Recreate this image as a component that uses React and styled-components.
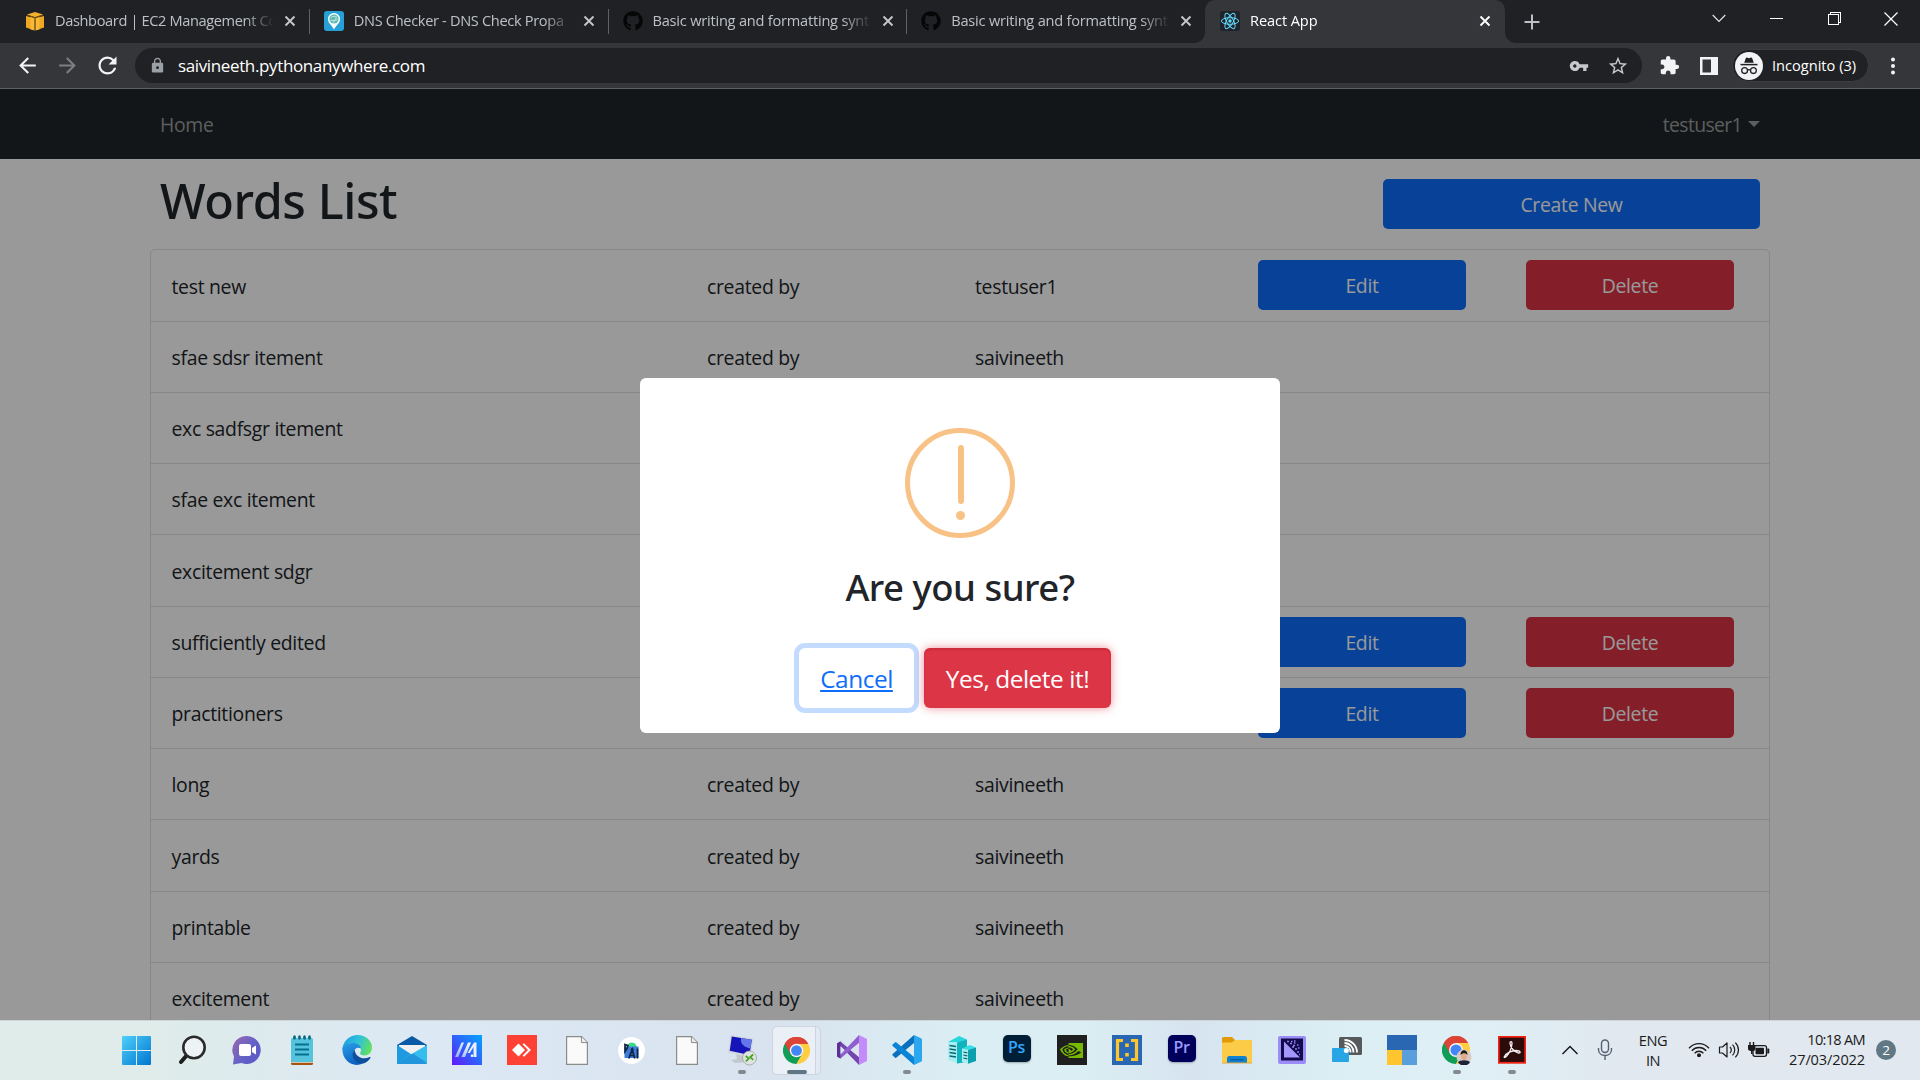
import React from "react";
import styled, { createGlobalStyle, css } from "styled-components";
import { FaGithub } from "react-icons/fa";
import { MdArrowBack, MdArrowForward, MdRefresh, MdLock, MdVpnKey, MdStarBorder, MdExtension } from "react-icons/md";
import { SiNvidia } from "react-icons/si";

const GlobalStyle = createGlobalStyle`
  *, *::before, *::after { box-sizing: border-box; }
  body { margin: 0; overflow: hidden; font-family: "Open Sans", "Noto Sans", sans-serif; }
  svg { display: block; flex: none; }
`;

const Screen = styled.div`
  width: 1920px;
  height: 1080px;
  display: flex;
  flex-direction: column;
  overflow: hidden;
`;

/* ---------- browser chrome ---------- */

const TabStrip = styled.header`
  height: 43px;
  flex: none;
  display: flex;
  padding-left: 10px;
  background: #202124;
`;

const Tab = styled.div`
  width: 298.75px;
  height: 43px;
  flex: none;
  display: flex;
  align-items: center;
  padding: 0 14px 1px 15px;
  position: relative;
  color: ${(p) => (p.$active ? "#fff" : "#bdc1c6")};
  ${(p) =>
    p.$active
      ? css`
          width: 300px;
          background: #35363a;
          border-radius: 10px 10px 0 0;
          &::before,
          &::after {
            content: "";
            position: absolute;
            bottom: 0;
            width: 10px;
            height: 10px;
          }
          &::before {
            left: -10px;
            background: radial-gradient(circle at 0 0, transparent 9.5px, #35363a 10px);
          }
          &::after {
            right: -10px;
            background: radial-gradient(circle at 100% 0, transparent 9.5px, #35363a 10px);
          }
        `
      : ""}
  ${(p) =>
    p.$divider
      ? css`
          &::after {
            content: "";
            position: absolute;
            right: -1px;
            top: 9px;
            width: 1px;
            height: 25px;
            background: #5f6165;
          }
        `
      : ""}
`;

const Favicon = styled.span`
  width: 20px;
  margin-right: 10px;
  display: flex;
  justify-content: center;
  flex: none;
`;

const TabTitle = styled.span`
  width: 220px;
  flex: none;
  overflow: hidden;
  white-space: nowrap;
  padding-bottom: 2px;
  font-size: 14.6px;
  line-height: 24px;
  letter-spacing: ${(p) => p.$spacing}px;
  mask-image: linear-gradient(90deg, #000 190px, transparent 219px);
`;

const CloseIcon = styled.svg`
  margin-left: 9px;
`;

const NewTab = styled.div`
  width: 54px;
  display: flex;
  align-items: center;
  justify-content: center;
`;

const WindowControls = styled.div`
  margin-left: auto;
  display: flex;
  height: 37px;
  align-items: center;
`;

const ControlCell = styled.div`
  width: 57.3px;
  display: flex;
  justify-content: center;
`;

const Toolbar = styled.div`
  height: 46px;
  flex: none;
  display: flex;
  align-items: center;
  padding: 0 0 0 7px;
  background: #35363a;
  border-bottom: 1px solid #5f6063;
`;

const NavIcon = styled.div`
  width: 40px;
  display: flex;
  justify-content: center;
  padding-left: 1px;
  color: ${(p) => (p.$dim ? "#7d7e81" : "#f1f3f4")};
`;

const Omnibox = styled.div`
  width: 1507px;
  height: 35px;
  margin-left: 8px;
  padding: 0 13px 0 14px;
  border-radius: 18px;
  background: #202124;
  display: flex;
  align-items: center;
  color: #9aa0a6;
`;

const Url = styled.span`
  margin-left: 12px;
  padding-bottom: 1px;
  color: #fff;
  font-size: 17px;
  letter-spacing: -0.37px;
`;

const OmniActions = styled.div`
  margin-left: auto;
  display: flex;
  align-items: center;
  gap: 18px;
  color: #c6c8ca;
`;

const ExtensionCell = styled.div`
  width: 40px;
  display: flex;
  justify-content: center;
  color: #f1f3f4;
  margin-left: ${(p) => p.$before || 0}px;
`;

const IncognitoPill = styled.div`
  width: 137px;
  height: 33px;
  margin-left: 3px;
  padding-left: 2px;
  border: 1px solid #3c3d41;
  border-radius: 17px;
  background: #202124;
  display: flex;
  align-items: center;
  color: #fff;
  font-size: 14.6px;
`;

const PillLabel = styled.span`
  margin-left: 9px;
  padding-bottom: 2px;
`;

/* ---------- web page ---------- */

const Page = styled.main`
  flex: 1;
  min-height: 0;
  overflow: hidden;
  position: relative;
  background: #fff;
  color: #212529;
  font-size: 19.4px;
  letter-spacing: -0.3px;
`;

const Navbar = styled.nav`
  height: 70px;
  padding: 0 160px;
  display: flex;
  align-items: center;
  justify-content: space-between;
  background: #212529;
  color: #9b9d9e;
`;

const UserMenu = styled.span`
  display: flex;
  align-items: center;
  letter-spacing: -0.65px;
`;

const Caret = styled.span`
  margin: 0 0 1px 6px;
  border: 6px solid transparent;
  border-top-color: #9b9d9e;
  border-bottom: 0;
`;

const PageHeader = styled.div`
  height: 90px;
  padding: 0 160px;
  display: flex;
  align-items: center;
  justify-content: space-between;
`;

const PageTitle = styled.h1`
  margin: 0;
  padding-bottom: 8.5px;
  font: 500 48.5px / 60px "Noto Sans", sans-serif;
  letter-spacing: -0.4px;
`;

const Button = styled.button`
  height: 50px;
  width: ${(p) => (p.$wide ? 377 : 208)}px;
  margin: 0 ${(p) => (p.$wide ? 0 : 15)}px;
  padding: 1px 0 0;
  border: 0;
  border-radius: 5px;
  color: #fff;
  background: ${(p) => (p.$danger ? "#dc3545" : "#0d6efd")};
  font-family: inherit;
  font-size: inherit;
  letter-spacing: inherit;
`;

const WordList = styled.ul`
  width: 1620px;
  margin: 0 auto;
  padding: 0;
  list-style: none;
  border: 1px solid #dfdfdf;
  border-radius: 5px;
`;

const WordRow = styled.li`
  height: 71.25px;
  padding-left: 20.5px;
  display: grid;
  grid-template-columns: 535.5px 268px 268px 268px 238px;
  align-items: center;
  border-top: 1px solid #dfdfdf;
  &:first-child {
    height: 70.5px;
    border-top: 0;
  }
`;

const WordCell = styled.span`
  padding-top: 1.5px;
`;

const Backdrop = styled.div`
  position: absolute;
  inset: 0;
  background: rgba(0, 0, 0, 0.4);
`;

const Modal = styled.section`
  position: absolute;
  left: 640px;
  top: 289px;
  width: 640px;
  height: 355px;
  padding-top: 50px;
  border-radius: 6px;
  background: #fff;
  display: flex;
  flex-direction: column;
  align-items: center;
`;

const WarningRing = styled.div`
  width: 110px;
  height: 110px;
  padding-top: 12px;
  border: 5px solid #f8c286;
  border-radius: 50%;
  display: flex;
  flex-direction: column;
  align-items: center;
  gap: 7px;
`;

const WarningBar = styled.span`
  width: 6px;
  height: 59px;
  margin-left: 2px;
  border-radius: 3px;
  background: #f8c286;
`;

const WarningDot = styled.span`
  width: 9px;
  height: 9px;
  margin-left: 1px;
  border-radius: 50%;
  background: #f8c286;
`;

const ModalTitle = styled.h2`
  margin: 27px 0 38px;
  font: 500 36.5px / 45px "Noto Sans", sans-serif;
  letter-spacing: -0.5px;
`;

const ModalActions = styled.div`
  display: flex;
  gap: 10px;
  padding-right: 10px;
`;

const ModalButton = styled.button`
  width: ${(p) => (p.$danger ? 187 : 115)}px;
  height: 60px;
  padding: 1px 0 0;
  border: 0;
  border-radius: 6px;
  font-family: inherit;
  font-size: 24.4px;
  letter-spacing: -0.45px;
  ${(p) =>
    p.$danger
      ? css`
          color: #fff;
          background: #dc3545;
          box-shadow: inset 0 2px 2px rgba(150, 10, 30, 0.22), 0 0 10px rgba(220, 53, 69, 0.55);
        `
      : css`
          color: #0d6efd;
          background: #fff;
          text-decoration: underline;
          text-decoration-thickness: 2px;
          text-underline-offset: 2px;
          box-shadow: 0 0 0 5px #c2dbfe;
        `}
`;

/* ---------- taskbar ---------- */

const Taskbar = styled.footer`
  height: 60px;
  flex: none;
  display: flex;
  align-items: center;
  padding: 0 0 1px 109px;
  color: #1b1b1b;
  border-top: 1px solid #ccd6da;
  background: linear-gradient(90deg, #dfecea 0, #dfecea 150px, #dce8f3 420px, #d8e3ef 780px, #dbeef3 960px, #dbeef3 1080px, #d7e4f0 1190px, #dceff4 1350px, #dfeff5 1480px, #e1e8f0 1620px, #e2e8f0 1920px);
`;

const AppSlot = styled.div`
  width: 55px;
  height: 58px;
  display: flex;
  align-items: center;
  justify-content: center;
  position: relative;
  ${(p) =>
    p.$running
      ? css`
          &::after {
            content: "";
            position: absolute;
            bottom: 5px;
            width: ${p.$focused ? 20 : 8}px;
            height: 4px;
            border-radius: 2px;
            background: ${p.$focused ? "#5f7684" : "#84898f"};
          }
        `
      : ""}
`;

const FocusPlate = styled.div`
  width: 49px;
  height: 49px;
  display: flex;
  flex: none;
  align-items: center;
  justify-content: center;
  border: 1px solid #cdd6e0;
  border-radius: 5px;
  background: linear-gradient(90deg, #ebeff6 42px, #cdd6e0 42px, #cdd6e0 43px, #e2e9f2 43px);
`;

const Tray = styled.div`
  display: flex;
  align-items: center;
  margin-left: 13px;
  font-size: 14.6px;
  line-height: 20px;
`;

const TrayCell = styled.div`
  width: ${(p) => p.$width}px;
  display: flex;
  justify-content: center;
`;

const Language = styled.div`
  width: 62px;
  text-align: center;
  letter-spacing: -0.45px;
  padding-bottom: 1px;
`;

const Clock = styled.div`
  width: 91px;
  display: flex;
  flex-direction: column;
  align-items: flex-end;
  padding-bottom: 3px;
`;

const ClockLine = styled.span`
  letter-spacing: ${(p) => p.$spacing}px;
`;

const Badge = styled.span`
  width: 20px;
  height: 20px;
  margin-left: 11px;
  border-radius: 50%;
  background: #5f7884;
  color: #fff;
  font-size: 13.5px;
  line-height: 20px;
  text-align: center;
`;

/* ---------- icons ---------- */

const AwsIcon = () => (
  <svg width="18" height="19" viewBox="0 0 18 19">
    <path d="M9 0l8 2.6L9 5.2 1 2.6z" fill="#f5b02c" />
    <path d="M0 4l5 1.2v12L0 15.4zM13 5.2L18 4v11.4l-5 1.800z" fill="#f0a824" />
    <path d="M4.600 5.100L8.600 6v12.500l-4-1.100zM13.400 5.100L9.400 6v12.500l4-1.100z" fill="#f8b935" />
    <path d="M1 3.200l8 2.300 8-2.300M9 5.500V18" stroke="#8a5a12" strokeWidth=".800" fill="none" />
  </svg>
);

const DnsIcon = () => (
  <svg width="20" height="20" viewBox="0 0 20 20">
    <rect width="20" height="20" rx="3" fill="#25a0d8" />
    <path d="M10 2a6 6 0 0 0-6 6.2C4 12 8 14.6 10 18.4c2-3.8 6-6.4 6-10.2A6 6 0 0 0 10 2z" fill="#fff" />
    <circle cx="10" cy="8" r="4.6" fill="#5db8b4" />
    <path d="M7 6.6c2-1.8 4-1.4 5.6-.4M6.4 9c2 .8 5 .8 7-.4M9 11.8c1-2 3-3 3.400-6" stroke="#c9ebe6" strokeWidth=".9" fill="none" />
  </svg>
);

const ReactIcon = () => (
  <svg width="20" height="20" viewBox="0 0 20 20">
    <rect width="20" height="20" rx="3" fill="#20232a" />
    <g stroke="#61dafb" strokeWidth="1" fill="none">
      <ellipse cx="10" cy="10" rx="8.6" ry="3.3" />
      <ellipse cx="10" cy="10" rx="8.6" ry="3.3" transform="rotate(60 10 10)" />
      <ellipse cx="10" cy="10" rx="8.6" ry="3.3" transform="rotate(120 10 10)" />
    </g>
    <circle cx="10" cy="10" r="1.7" fill="#61dafb" />
  </svg>
);

const Cross = ({ color }) => (
  <CloseIcon width="12" height="12" viewBox="0 0 12 12">
    <path d="M1.5 1.5l9 9m0-9l-9 9" stroke={color} strokeWidth="1.9" />
  </CloseIcon>
);

const IncognitoIcon = () => (
  <svg width="28" height="28" viewBox="0 0 28 28">
    <circle cx="14" cy="14" r="14" fill="#f1f3f4" />
    <path d="M9.2 10.8l1.6-4.6c.3-.8.9-.8 1.6-.5l1.6.5 1.6-.5c.7-.3 1.3-.3 1.6.5l1.6 4.6z" fill="#202124" />
    <path d="M5.5 12.6h17" stroke="#202124" strokeWidth="1.5" />
    <g fill="none" stroke="#202124" strokeWidth="1.3">
      <circle cx="9.6" cy="18.6" r="2.9" />
      <circle cx="18.4" cy="18.6" r="2.9" />
      <path d="M12.4 18.2c1-.7 2.2-.7 3.2 0" />
    </g>
  </svg>
);

const WindowsIcon = () => (
  <svg width="29" height="29" viewBox="1 1 29 29">
    <defs>
      <linearGradient id="win" x1="0" y1="0" x2="1" y2="1">
        <stop offset="0" stopColor="#4fd0fb" />
        <stop offset="1" stopColor="#0075cf" />
      </linearGradient>
    </defs>
    <path d="M2 1h13v14H1V2a1 1 0 0 1 1-1zM16 1h13a1 1 0 0 1 1 1v13H16zM1 16h14v14H2a1 1 0 0 1-1-1zM16 16h14v13a1 1 0 0 1-1 1H16z" fill="url(#win)" />
  </svg>
);

const SearchIcon = () => (
  <svg width="28" height="30" viewBox="0 0 28 30">
    <path d="M9 20L3 27" stroke="#1e1e1e" strokeWidth="4" strokeLinecap="round" />
    <circle cx="16" cy="12.500" r="10.700" fill="#edf2f4" stroke="#2a2a2b" strokeWidth="2.600" />
  </svg>
);

const ChatIcon = () => (
  <svg width="30" height="30" viewBox="0 0 30 30">
    <defs>
      <linearGradient id="chat" x1="0" y1=".2" x2="1" y2=".9">
        <stop offset="0" stopColor="#9467ad" />
        <stop offset=".5" stopColor="#6562c8" />
        <stop offset="1" stopColor="#5a55c5" />
      </linearGradient>
    </defs>
    <path d="M15 1a14 14 0 1 1-5.500 27L1 29.500l1-8A14 14 0 0 1 15 1z" fill="url(#chat)" />
    <rect x="7" y="9" width="12" height="12" rx="2" fill="#fff" />
    <path d="M20 13l4-2.500v9L20 17z" fill="#fff" />
  </svg>
);

const NotepadIcon = () => (
  <svg width="22" height="30" viewBox="0 0 22 30">
    <path d="M0 26h22v2.500a1.500 1.500 0 0 1-1.500 1.500h-19A1.500 1.500 0 0 1 0 28.500z" fill="#a3540e" />
    <path d="M0 27.200h22" stroke="#f4f4f4" />
    <rect y="3" width="22" height="24" rx="1.500" fill="#55c3dc" />
    <path d="M4 9.500h14M4 14.500h14M4 19.500h14" stroke="#076f8f" strokeWidth="1.800" />
    <g fill="#0a6780">
      <ellipse cx="3.500" cy="2.500" rx="1.400" ry="2.200" />
      <ellipse cx="8.500" cy="2.500" rx="1.400" ry="2.200" />
      <ellipse cx="13.500" cy="2.500" rx="1.400" ry="2.200" />
      <ellipse cx="18.500" cy="2.500" rx="1.400" ry="2.200" />
    </g>
  </svg>
);

const EdgeIcon = () => (
  <svg width="30" height="30" viewBox="0 0 30 30">
    <defs>
      <linearGradient id="edgeTop" x1="0" y1=".3" x2="1" y2=".6">
        <stop offset="0" stopColor="#1f9fe2" />
        <stop offset=".5" stopColor="#2fc3d8" />
        <stop offset="1" stopColor="#65e15a" />
      </linearGradient>
      <linearGradient id="edgeLeft" x1="0" y1="0" x2=".4" y2="1">
        <stop offset="0" stopColor="#2aa0e6" />
        <stop offset="1" stopColor="#0b63c4" />
      </linearGradient>
    </defs>
    <path d="M.500 13.500C1.500 5.500 8 0 15.500 0 24 0 30 6 30 12.500c0 5-3.500 8-7.500 8-3 0-4.500-1-4.500-2.200 0-.900 1-1.300 1-3.600 0-3.500-3.200-6.400-8-6.400-5 0-8.500 2-10.500 5.200z" fill="url(#edgeTop)" />
    <path d="M.300 13C2.300 9.600 6 8 11 8c4.500 0 8 2.600 8 5.500-4-2.500-8 1-7.500 6C12 25.500 17 28.500 21 28.300 12 33 0 27 .300 13z" fill="url(#edgeLeft)" />
    <path d="M12.500 14.500c-4.500 5.500-.500 14 7.500 14.200 4.200-.600 7-3.200 8.500-6 .300-.700-.300-1-.900-.700-6 3-14 .800-15.100-7.500z" fill="#0e4f9e" />
  </svg>
);

const MailIcon = () => (
  <svg width="30" height="28" viewBox="0 0 30 28">
    <path d="M0 9L15 0l15 9v4H0z" fill="#0a5aa5" />
    <path d="M2 9h26v7L15 22 2 16z" fill="#f1f1f1" />
    <path d="M0 9l17 11-17 8z" fill="#1f9ae0" />
    <path d="M30 9v17.500a1.500 1.500 0 0 1-1.500 1.500h-27A1.500 1.500 0 0 1 0 26.500z" fill="#35bdee" />
    <path d="M16 17.500L30 27c-.300.700-1 1-2 1H1.500C.500 28 0 27.400 0 26.500z" fill="#2196dd" />
  </svg>
);

const MIcon = () => (
  <svg width="30" height="30" viewBox="0 0 30 30">
    <defs>
      <linearGradient id="mbg" x1="0" y1="1" x2="1" y2="0">
        <stop offset="0" stopColor="#6415fb" />
        <stop offset=".5" stopColor="#2e62fb" />
        <stop offset="1" stopColor="#04a5fc" />
      </linearGradient>
      <linearGradient id="mfg" x1="0" y1="1" x2="1" y2="0">
        <stop offset="0" stopColor="#8cb2fb" />
        <stop offset="1" stopColor="#fff" />
      </linearGradient>
    </defs>
    <rect width="30" height="30" fill="url(#mbg)" />
    <path d="M3 22L9.500 7.500H12L6.200 22zM9.500 22L16 7.500h3L13 22z" fill="url(#mfg)" />
    <path d="M15.500 18l6.500-10.500h2.500V22H21.500V12L17.800 18z" fill="#e7efff" />
    <circle cx="20" cy="20.700" r="1.300" fill="#fff" />
  </svg>
);

const AnyDeskIcon = () => (
  <svg width="30" height="30" viewBox="0 0 30 30">
    <rect width="30" height="30" fill="#fd4134" />
    <path d="M5 15l6.500-6.500L18 15l-6.500 6.500z" fill="#fff" />
    <path d="M15.500 9.200l1.500-1L24 15l-7 6.800-1.500-1L21 15z" fill="#fff" />
  </svg>
);

const FileIcon = () => (
  <svg width="22" height="29" viewBox="0 0 22 29">
    <path d="M.600.600h14.900l5.900 5.900v21.900H.600z" fill="#fafafa" stroke="#8b8b88" strokeWidth="1.200" />
    <path d="M15.400.800v5.800h5.800" fill="#ececec" stroke="#8b8b88" strokeWidth="1" />
  </svg>
);

const AndroidStudioIcon = () => (
  <svg width="27" height="27" viewBox="0 0 27 27">
    <circle cx="13.500" cy="13.500" r="13.500" fill="#fff" />
    <path d="M9 9.500c1-5 8-5.500 9.500-.500V10H9z" fill="#3ddc84" />
    <path d="M6.500 9.500h14v11.500h-14z" fill="#3d7bdc" />
    <path d="M7 7.500l3 1-1 3-2 3zM10.800 21.500l3.400-9 2.600 9M12 18.500h4M19.500 11.500v10" stroke="#0f2740" strokeWidth="1.700" fill="none" />
    <circle cx="14.200" cy="12.500" r="1.500" fill="#0f2740" />
  </svg>
);

const RemoteIcon = () => (
  <svg width="30" height="32" viewBox="0 0 30 32">
    <path d="M9 20l8 2 2 6-11 1-4-3 6-1z" fill="#c4c8cc" />
    <path d="M3.500 1l23 3.500L23.500 23 1 18.500z" fill="#d4d8dc" />
    <path d="M4.800 2.500l20 3.200L22.500 21 2.700 16.800z" fill="#1414b8" />
    <path d="M14 4l10.800 1.700-1.300 9C18 13 13 11 14 4z" fill="#6477ea" />
    <circle cx="22.500" cy="24" r="7" fill="#dfe2e0" stroke="#9da3a3" strokeWidth=".800" />
    <path d="M18.800 22l3 2.600-3 2.800M26.200 20.500l-3 2.600 3 2.800" stroke="#3fa521" strokeWidth="1.700" fill="none" />
  </svg>
);

const ChromeIcon = ({ size = 27 }) => (
  <svg width={size} height={size} viewBox="0 0 48 48">
    <path d="M24 24L3.200 12A24 24 0 0 1 44.800 12z" fill="#db4437" />
    <path d="M24 24L3.200 12A24 24 0 0 0 24 48l10.400-18z" fill="#0f9d58" />
    <path d="M24 24l10.400 6L24 48a24 24 0 0 0 20.800-36H24z" fill="#ffcd40" />
    <path d="M24 12h20.800A24 24 0 0 0 3.200 12l10.400 18z" fill="#db4437" />
    <circle cx="24" cy="24" r="12" fill="#f5f5f5" />
    <circle cx="24" cy="24" r="9.500" fill="#4285f4" />
  </svg>
);

const VisualStudioIcon = () => (
  <svg width="30" height="30" viewBox="0 0 30 30">
    <path d="M0 8.500l3.500-2L22 22v8L3.500 11v8.500L0 21.500z" fill="#7346b0" />
    <path d="M0 21.500l3.500 2L22 8V0L3.500 19.500z" fill="#8f5fd0" />
    <path d="M0 8.500l3.500-2.200V11L3.500 23.500 0 21.500z" fill="#5b2f96" />
    <path d="M3.500 11.500L7.500 15l-4 4z" fill="#dbe5f0" />
    <path d="M22 8v14l-8.500-7z" fill="#dbe5f0" />
    <path d="M22 0l8 4v22l-8 4z" fill="#c48bfa" />
  </svg>
);

const VsCodeIcon = () => (
  <svg width="30" height="30" viewBox="0 0 30 30">
    <path d="M22 0v8L4.500 22.500c-.600.500-1.200.500-1.700 0L.700 20.600c-.600-.500-.600-1.200 0-1.700z" fill="#0a6fbd" />
    <path d="M22 30v-8L4.500 7.500c-.600-.500-1.200-.500-1.700 0L.700 9.400c-.600.500-.600 1.200 0 1.700z" fill="#0b84d3" />
    <path d="M22 0l7 3.200c.700.300 1 .900 1 1.600v20.400c0 .700-.300 1.300-1 1.600L22 30z" fill="#2ba7f0" />
  </svg>
);

const ServerIcon = () => (
  <svg width="28" height="28" viewBox="0 0 28 28">
    <path d="M0 6L11 0l8 3.500-8 3z" fill="#28d6dd" />
    <path d="M0 6l11 .500V28L0 24z" fill="#a9eef0" />
    <path d="M9 6.400l10-2.900V26l-10 1.500z" fill="#12b3bf" />
    <path d="M1.500 9.500l6.500 1M1.500 13l6.500 1M1.500 16.500l6.500 1M1.500 20l6.500 1" stroke="#0b6671" strokeWidth="1.300" />
    <path d="M14 12.500l8-3.500 6 2.500-7 2.500z" fill="#35dfe6" />
    <path d="M14 12.500l7 1.500v14l-7-2z" fill="#a9eef0" />
    <path d="M20 14l8-2.500V25l-8 2.800z" fill="#0c9fae" />
    <path d="M15.300 16l4 .800M15.300 19l4 .800M15.300 22l4 .800" stroke="#0b6671" strokeWidth="1.200" />
  </svg>
);

const AdobeTile = styled.span`
  width: 28px;
  height: 27px;
  margin-bottom: 3px;
  border-radius: 5px;
  background: ${(p) => p.$bg};
  color: ${(p) => p.$fg};
  font: 600 16px / 25px "Open Sans", sans-serif;
  letter-spacing: -0.3px;
  text-align: center;
  box-shadow: 0 1px 2px rgba(0, 0, 0, 0.3);
`;

const NvidiaTile = styled.span`
  width: 30px;
  height: 30px;
  background: #1f1f1f;
  color: #76b900;
  display: flex;
  align-items: center;
  justify-content: center;
`;

const BracketIcon = () => (
  <svg width="30" height="30" viewBox="0 0 30 30">
    <rect width="30" height="30" fill="#2a67b2" />
    <path d="M11 5.500H5.500v19H11M19 5.500h5.500v19H19" stroke="#fec52e" strokeWidth="3.200" fill="none" />
    <path d="M13.200 8.500h3.600v3.500h-3.600zM13.200 18h3.600v3.500h-3.600z" fill="#fec52e" />
  </svg>
);

const FolderIcon = () => (
  <svg width="30" height="27" viewBox="0 0 30 27">
    <path d="M0 1.500A1.500 1.500 0 0 1 1.500 0H10l3 3h15.500A1.500 1.500 0 0 1 30 4.500V9H0z" fill="#e09b06" />
    <path d="M0 5.500h10L13 3h15.500A1.500 1.500 0 0 1 30 4.500V26H0z" fill="#fccb48" />
    <path d="M5 26v-4.500A2.500 2.500 0 0 1 7.500 19h15a2.500 2.500 0 0 1 2.500 2.500V26z" fill="#0f82d0" />
    <path d="M8.500 22.700h13" stroke="#0a5ea6" strokeWidth="1.500" />
    <path d="M0 26h30" stroke="#e0a93c" />
  </svg>
);

const EncoderIcon = () => (
  <svg width="28" height="28" viewBox="0 0 28 28">
    <rect width="28" height="28" rx="2" fill="#9b8cf8" />
    <rect x="3" y="2.500" width="22" height="22" fill="#120a4a" />
    <path d="M6 5.500v16h16z" fill="#a497fb" />
    <path d="M9 5.500h2M12 7.500h2M15 9.500h2M13 5.500h1.500M16 7h1.500M19 9h1.500M14 11h2M17 13h2M20 12h1.500M19 16h2M16 5h1.500M21 18.500h1" stroke="#8f80f2" strokeWidth="1.500" />
  </svg>
);

const CastIcon = () => (
  <svg width="30" height="26" viewBox="0 0 30 26">
    <rect x="7" y="0" width="23" height="18" rx="1.500" fill="#57595c" />
    <path d="M12.500 9a6 6 0 0 1 6 6.500M12.500 6a9 9 0 0 1 9 9.500M12.500 3c7 0 12.500 5.500 12.500 12.500" stroke="#fff" strokeWidth="1.800" fill="none" />
    <rect x="0" y="11" width="17" height="14" rx="1" fill="#27a5e4" />
    <circle cx="14.300" cy="13.500" r="2.500" fill="#fff" />
  </svg>
);

const BlocksIcon = () => (
  <svg width="30" height="30" viewBox="0 0 30 30">
    <path d="M0 0h30v15H0z" fill="#2a67b2" />
    <path d="M0 15h15v15H0z" fill="#fec52e" />
    <path d="M15 15h15v15H15z" fill="#5a9edb" />
  </svg>
);

const ChromeProfileIcon = () => (
  <svg width="30" height="30" viewBox="0 0 30 30">
    <g transform="translate(0 1)">
      <ChromeIcon size={28} />
    </g>
    <circle cx="22" cy="22" r="7.500" fill="#d5cbc4" />
    <path d="M16 27.500c1-3 11-3 12 0a7.500 7.500 0 0 1-12 0z" fill="#1d2238" />
    <ellipse cx="22" cy="21" rx="3" ry="4" fill="#e2ab8c" />
    <path d="M18.500 20c-.500-6.500 7.500-6.500 7 0-1.500-2.500-5-2.500-7 0z" fill="#1c1917" />
  </svg>
);

const AcrobatIcon = () => (
  <svg width="28" height="28" viewBox="0 0 28 28">
    <rect x=".800" y=".800" width="26.400" height="26" fill="#2c0b0b" stroke="#f1220f" strokeWidth="1.800" />
    <path d="M6.500 20.500c2-3.500 7-6 11.500-6 5 0 5 3 2.500 2.500-4-1-8-5-8.500-9.500-.200-2.500 2.200-2.500 2 0-.300 4.500-3 10-5.500 12.800-1.500 1.600-3 1.500-2 .200z" fill="none" stroke="#f5eeee" strokeWidth="1.300" />
  </svg>
);

const ChevronUp = () => (
  <svg width="18" height="10" viewBox="0 0 18 10">
    <path d="M1.500 9L9 1.500 16.500 9" stroke="#1b1b1b" strokeWidth="1.500" fill="none" />
  </svg>
);

const MicIcon = () => (
  <svg width="16" height="22" viewBox="0 0 16 22">
    <rect x="4.500" y="1" width="7" height="12.500" rx="3.500" fill="none" stroke="#556170" strokeWidth="1.400" />
    <path d="M1.500 9v1.500c0 8 13 8 13 0V9M8 16.500V21" fill="none" stroke="#556170" strokeWidth="1.400" />
  </svg>
);

const WifiIcon = () => (
  <svg width="22" height="16" viewBox="0 0 22 16">
    <g stroke="#1b1b1b" strokeWidth="1.300" fill="none">
      <path d="M1 6.200c5.500-6 14.500-6 20 0" />
      <path d="M3.800 8.700c4-4.300 10.400-4.300 14.400 0" />
      <path d="M6.600 11.200c2.500-2.600 6.300-2.600 8.800 0" />
    </g>
    <circle cx="11" cy="13.200" r="2" fill="#1b1b1b" />
  </svg>
);

const SpeakerIcon = () => (
  <svg width="22" height="18" viewBox="0 0 22 18">
    <g stroke="#1b1b1b" strokeWidth="1.200" fill="none">
      <path d="M1.500 6h3L9 2v14l-4.500-4h-3z" strokeLinejoin="round" />
      <path d="M12 6c1.600 1.800 1.600 4.200 0 6M14.500 3.700c3 3 3 7.600 0 10.600M17.300 1.600c4.200 4.200 4.200 10.600 0 14.800" />
    </g>
  </svg>
);

const BatteryIcon = () => (
  <svg width="22" height="16" viewBox="0 0 22 16">
    <rect x="5" y="3.700" width="13.500" height="10.600" rx="2" fill="none" stroke="#1b1b1b" strokeWidth="1.300" />
    <rect x="7.500" y="5.700" width="8.500" height="6.600" rx="1" fill="#1b1b1b" />
    <path d="M19.300 6.500h1.200a.800.800 0 0 1 .8.800v3.400a.800.800 0 0 1-.8.800h-1.200z" fill="#1b1b1b" />
    <path d="M0 3h7.500v3c0 3-2 3-3 3v3H3V9C2 9 0 9 0 6z" fill="#1b1b1b" />
    <path d="M2 0v3.500M5.500 0v3.500" stroke="#1b1b1b" strokeWidth="1.400" />
  </svg>
);

/* ---------- data ---------- */

const tabs = [
  { title: "Dashboard | EC2 Management Co", icon: <AwsIcon />, spacing: -0.37, divider: true },
  { title: "DNS Checker - DNS Check Propa", icon: <DnsIcon />, spacing: -0.33, divider: true },
  { title: "Basic writing and formatting synt", icon: <FaGithub size={20} color="#060606" />, spacing: -0.22, divider: true },
  { title: "Basic writing and formatting synt", icon: <FaGithub size={20} color="#060606" />, spacing: -0.22 },
  { title: "React App", icon: <ReactIcon />, spacing: -0.1, active: true },
];

const words = [
  { text: "test new", author: "testuser1", mine: true },
  { text: "sfae sdsr itement", author: "saivineeth" },
  { text: "exc sadfsgr itement", author: "saivineeth" },
  { text: "sfae exc itement", author: "saivineeth" },
  { text: "excitement sdgr", author: "saivineeth" },
  { text: "sufficiently edited", author: "testuser1", mine: true },
  { text: "practitioners", author: "testuser1", mine: true },
  { text: "long", author: "saivineeth" },
  { text: "yards", author: "saivineeth" },
  { text: "printable", author: "saivineeth" },
  { text: "excitement", author: "saivineeth" },
];

const apps = [
  { icon: <WindowsIcon /> },
  { icon: <SearchIcon /> },
  { icon: <ChatIcon /> },
  { icon: <NotepadIcon /> },
  { icon: <EdgeIcon /> },
  { icon: <MailIcon /> },
  { icon: <MIcon /> },
  { icon: <AnyDeskIcon /> },
  { icon: <FileIcon /> },
  { icon: <AndroidStudioIcon /> },
  { icon: <FileIcon /> },
  { icon: <RemoteIcon />, running: true },
  { icon: <FocusPlate><ChromeIcon /></FocusPlate>, running: true, focused: true },
  { icon: <VisualStudioIcon /> },
  { icon: <VsCodeIcon />, running: true },
  { icon: <ServerIcon /> },
  { icon: <AdobeTile $bg="#001e36" $fg="#31a8ff">Ps</AdobeTile> },
  { icon: <NvidiaTile><SiNvidia size={23} /></NvidiaTile> },
  { icon: <BracketIcon /> },
  { icon: <AdobeTile $bg="#00005b" $fg="#9999ff">Pr</AdobeTile> },
  { icon: <FolderIcon /> },
  { icon: <EncoderIcon /> },
  { icon: <CastIcon /> },
  { icon: <BlocksIcon /> },
  { icon: <ChromeProfileIcon />, running: true },
  { icon: <AcrobatIcon />, running: true },
];

export default function App() {
  return (
    <Screen>
      <GlobalStyle />
      <TabStrip>
        {tabs.map((tab, i) => (
          <Tab key={i} $active={tab.active} $divider={tab.divider}>
            <Favicon>{tab.icon}</Favicon>
            <TabTitle $spacing={tab.spacing}>{tab.title}</TabTitle>
            <Cross color={tab.active ? "#fff" : "#c4c7c9"} />
          </Tab>
        ))}
        <NewTab>
          <svg width="16" height="16" viewBox="0 0 16 16">
            <path d="M8 .500v15M.500 8h15" stroke="#bdc1c6" strokeWidth="2" />
          </svg>
        </NewTab>
        <WindowControls>
          <ControlCell>
            <svg width="14" height="9" viewBox="0 0 14 9">
              <path d="M.700 1L7 7.500 13.300 1" stroke="#e8eaed" strokeWidth="1.100" fill="none" />
            </svg>
          </ControlCell>
          <ControlCell>
            <svg width="13" height="1" viewBox="0 0 13 1" shapeRendering="crispEdges">
              <path d="M0 .500h13" stroke="#fff" />
            </svg>
          </ControlCell>
          <ControlCell>
            <svg width="13" height="13" viewBox="0 0 13 13" shapeRendering="crispEdges">
              <path d="M.500 2.500h10v10H.500zM2.500 2V.500h10v10H11" stroke="#fff" fill="none" />
            </svg>
          </ControlCell>
          <ControlCell>
            <svg width="14" height="14" viewBox="0 0 14 14">
              <path d="M.500.500l13 13m0-13l-13 13" stroke="#fff" strokeWidth="1.200" />
            </svg>
          </ControlCell>
        </WindowControls>
      </TabStrip>

      <Toolbar>
        <NavIcon><MdArrowBack size={25} /></NavIcon>
        <NavIcon $dim><MdArrowForward size={25} /></NavIcon>
        <NavIcon><MdRefresh size={27} /></NavIcon>
        <Omnibox>
          <MdLock size={17} />
          <Url>saivineeth.pythonanywhere.com</Url>
          <OmniActions>
            <MdVpnKey size={20} />
            <MdStarBorder size={22} />
          </OmniActions>
        </Omnibox>
        <ExtensionCell $before={7}><MdExtension size={21} /></ExtensionCell>
        <ExtensionCell>
          <svg width="18" height="18" viewBox="0 0 18 18">
            <path d="M0 0h18v18H0zM2.500 2.500v13h8.500v-13z" fillRule="evenodd" fill="#f1f3f4" />
          </svg>
        </ExtensionCell>
        <IncognitoPill>
          <IncognitoIcon />
          <PillLabel>Incognito (3)</PillLabel>
        </IncognitoPill>
        <ExtensionCell $before={4}>
          <svg width="4" height="18" viewBox="0 0 4 18">
            <circle cx="2" cy="2.500" r="2" fill="#f1f3f4" />
            <circle cx="2" cy="9" r="2" fill="#f1f3f4" />
            <circle cx="2" cy="15.500" r="2" fill="#f1f3f4" />
          </svg>
        </ExtensionCell>
      </Toolbar>

      <Page>
        <Navbar>
          <span>Home</span>
          <UserMenu>
            testuser1
            <Caret />
          </UserMenu>
        </Navbar>
        <PageHeader>
          <PageTitle>Words List</PageTitle>
          <Button $wide>Create New</Button>
        </PageHeader>
        <WordList>
          {words.map((word) => (
            <WordRow key={word.text}>
              <WordCell>{word.text}</WordCell>
              <WordCell>created by</WordCell>
              <WordCell>{word.author}</WordCell>
              {word.mine && <Button>Edit</Button>}
              {word.mine && <Button $danger>Delete</Button>}
            </WordRow>
          ))}
        </WordList>
        <Backdrop />
        <Modal>
          <WarningRing>
            <WarningBar />
            <WarningDot />
          </WarningRing>
          <ModalTitle>Are you sure?</ModalTitle>
          <ModalActions>
            <ModalButton>Cancel</ModalButton>
            <ModalButton $danger>Yes, delete it!</ModalButton>
          </ModalActions>
        </Modal>
      </Page>

      <Taskbar>
        {apps.map((app, i) => (
          <AppSlot key={i} $running={app.running} $focused={app.focused}>
            {app.icon}
          </AppSlot>
        ))}
        <Tray>
          <TrayCell $width={36}><ChevronUp /></TrayCell>
          <TrayCell $width={34}><MicIcon /></TrayCell>
          <Language>
            ENG
            <br />
            IN
          </Language>
          <TrayCell $width={30}><WifiIcon /></TrayCell>
          <TrayCell $width={30}><SpeakerIcon /></TrayCell>
          <TrayCell $width={30}><BatteryIcon /></TrayCell>
          <Clock>
            <ClockLine $spacing={-0.7}>10:18 AM</ClockLine>
            <ClockLine $spacing={-0.15}>27/03/2022</ClockLine>
          </Clock>
          <Badge>2</Badge>
        </Tray>
      </Taskbar>
    </Screen>
  );
}
